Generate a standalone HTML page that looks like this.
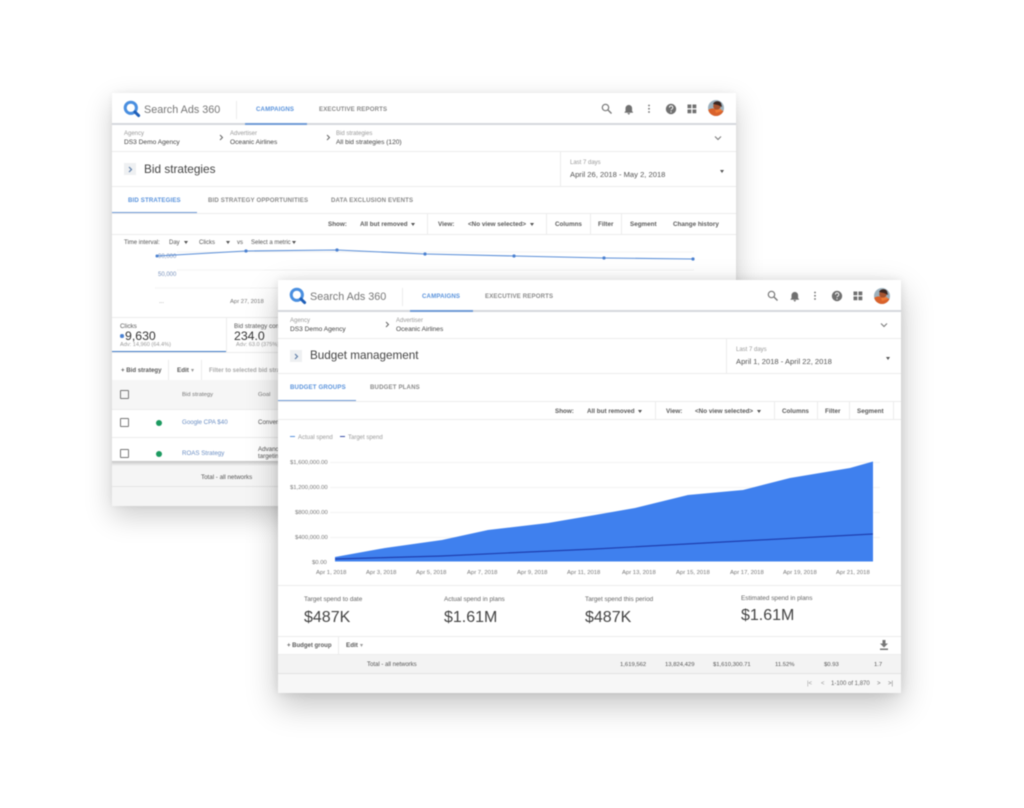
<!DOCTYPE html>
<html><head><meta charset="utf-8"><style>
html,body{margin:0;padding:0;background:#fff;width:1024px;height:808px;overflow:hidden}
body{position:relative;font-family:"Liberation Sans",Arial,sans-serif;color:#3c4043}
.card{position:absolute;background:#fff;box-shadow:0 10px 26px rgba(0,0,0,.2),0 0 8px rgba(0,0,0,.06);overflow:hidden;filter:blur(.42px)}
.t{position:absolute;white-space:nowrap;line-height:10px;height:10px;margin-top:1px}
.s{font-size:6.3px;color:#5a5a5a;font-weight:bold}
.g{font-size:5.9px;color:#777}
.gl{font-size:6px;color:#9a9a9a}
.tab{font-size:6.1px;font-weight:bold;color:#8a8a8a;letter-spacing:.15px}
.bl{color:#5a93dc}
.n{font-size:6.6px;color:#444}
.ln{position:absolute;background:#ececec}
.h{height:1px}.v{width:1px}
.abs{position:absolute}
.ar{position:absolute;width:0;height:0;border-left:2.5px solid transparent;border-right:2.5px solid transparent;border-top:3px solid #555}
.cb{position:absolute;width:7px;height:7px;border:1px solid #777;border-radius:1px}
.dot{position:absolute;width:6px;height:6px;border-radius:50%;background:#1c9a60}
</style></head><body>

<!-- BACK CARD -->
<div class="card" style="left:112px;top:93px;width:624px;height:413px">
<div style="position:absolute;inset:0;transform:translate(-112px,-93px);width:1024px;height:808px">
  <div class="abs" style="left:112px;top:123px;width:624px;height:2px;background:#d5d8dc"></div>
  <svg class="abs" style="left:123px;top:100px" width="18" height="18" viewBox="0 0 18 18"><circle cx="7.8" cy="7.8" r="5.6" fill="none" stroke="#4a8fe0" stroke-width="3"/><path d="M12 12l3.6 3.6" stroke="#1f5fb8" stroke-width="3" stroke-linecap="round"/></svg>
  <span class="t" style="left:144px;top:104px;font-size:10.8px;line-height:10px;color:#777">Search Ads 360</span>
  <div class="ln v" style="left:236px;top:101px;height:18px"></div>
  <span class="t tab bl" style="left:256px;top:104px">CAMPAIGNS</span>
  <div class="abs" style="left:245px;top:123px;width:62px;height:2px;background:#6f9ad6"></div>
  <span class="t tab" style="left:319px;top:104px">EXECUTIVE REPORTS</span>
  <svg class="abs" style="left:600px;top:102px" width="124" height="14" viewBox="0 0 124 14"><circle cx="5.5" cy="5.5" r="3.2" fill="none" stroke="#777" stroke-width="1.2"/><path d="M8 8l3.5 3.5" stroke="#777" stroke-width="1.3"/><path d="M24.5 10.5h8.5l-1.1-1.4V6.2a3.1 3.1 0 0 0-6.2 0v2.9zM27.6 11.2h2.3l-1.1 1.4z" fill="#707070" stroke="#707070" stroke-width=".4"/><circle cx="49" cy="3.5" r=".9" fill="#707070"/><circle cx="49" cy="6.8" r=".9" fill="#707070"/><circle cx="49" cy="10" r=".9" fill="#707070"/><circle cx="71" cy="7" r="5.2" fill="#707070"/><path d="M69.4 5.6a1.7 1.7 0 1 1 2.4 1.5c-.5.3-.8.5-.8 1.2" stroke="#fff" stroke-width=".9" fill="none"/><circle cx="71" cy="9.9" r=".6" fill="#fff"/><path d="M87.5 2.5h3.8v3.8h-3.8zM92.5 2.5h3.8v3.8h-3.8zM87.5 7.5h3.8v3.8h-3.8zM92.5 7.5h3.8v3.8h-3.8z" fill="#707070"/></svg>
  <svg class="abs" style="left:708px;top:100px" width="16" height="16" viewBox="0 0 16 16"><defs><clipPath id="a1"><circle cx="8" cy="8" r="8"/></clipPath></defs><g clip-path="url(#a1)"><rect width="16" height="16" fill="#9db1bd"/><path d="M0 16V10c3-2 5-2 8-1l8 2v5z" fill="#d9622b"/><circle cx="9" cy="6" r="3.8" fill="#a5532f"/><path d="M5 4c1-3 6-4 8-1l1 4-4-2z" fill="#3a2620"/><path d="M7 10l6-1 1 2-6 2z" fill="#ef7a35"/></g></svg>

  <span class="t gl" style="left:124px;top:128px">Agency</span>
  <span class="t n" style="left:124px;top:137px">DS3 Demo Agency</span>
  <svg class="abs" style="left:219px;top:134px" width="5" height="7"><path d="M1 1l2.5 2.5L1 6" fill="none" stroke="#666"/></svg>
  <span class="t gl" style="left:230px;top:128px">Advertiser</span>
  <span class="t n" style="left:230px;top:137px">Oceanic Airlines</span>
  <svg class="abs" style="left:326px;top:134px" width="5" height="7"><path d="M1 1l2.5 2.5L1 6" fill="none" stroke="#666"/></svg>
  <span class="t gl" style="left:336px;top:128px">Bid strategies</span>
  <span class="t n" style="left:336px;top:137px">All bid strategies (120)</span>
  <svg class="abs" style="left:714px;top:135px" width="8" height="6"><path d="M1 1.5l3 3 3-3" fill="none" stroke="#777"/></svg>
  <div class="ln h" style="left:112px;top:151px;width:624px"></div>

  <div class="abs" style="left:124px;top:163px;width:12px;height:12px;background:#eef0f2"></div>
  <svg class="abs" style="left:128px;top:166px" width="5" height="7"><path d="M1 1l2.5 2.5L1 6" fill="none" stroke="#5f7ea8" stroke-width="1.2"/></svg>
  <span class="t" style="left:144px;top:164px;font-size:11.8px;color:#444;margin-top:0">Bid strategies</span>
  <div class="ln v" style="left:560px;top:152px;height:34px"></div>
  <span class="t gl" style="left:570px;top:157px">Last 7 days</span>
  <span class="t" style="left:570px;top:169px;font-size:7.6px;color:#555">April 26, 2018 - May 2, 2018</span>
  <div class="ar" style="left:720px;top:170px"></div>
  <div class="ln h" style="left:112px;top:186px;width:624px"></div>

  <span class="t tab bl" style="left:128px;top:195px">BID STRATEGIES</span>
  <div class="abs" style="left:112px;top:212px;width:85px;height:1.5px;background:#6f9ad6"></div>
  <span class="t tab" style="left:208px;top:195px">BID STRATEGY OPPORTUNITIES</span>
  <span class="t tab" style="left:331px;top:195px">DATA EXCLUSION EVENTS</span>
  <div class="ln h" style="left:112px;top:213px;width:624px"></div>

  <span class="t s" style="left:328px;top:219px">Show:</span>
  <span class="t s" style="left:360px;top:219px">All but removed</span>
  <div class="ar" style="left:411px;top:223px"></div>
  <div class="ln v" style="left:427px;top:214px;height:20px"></div>
  <span class="t s" style="left:438px;top:219px">View:</span>
  <span class="t s" style="left:468px;top:219px">&lt;No view selected&gt;</span>
  <div class="ar" style="left:530px;top:223px"></div>
  <div class="ln v" style="left:546px;top:214px;height:20px"></div>
  <span class="t s" style="left:555px;top:219px">Columns</span>
  <div class="ln v" style="left:590px;top:214px;height:20px"></div>
  <span class="t s" style="left:598px;top:219px">Filter</span>
  <div class="ln v" style="left:621px;top:214px;height:20px"></div>
  <span class="t s" style="left:630px;top:219px">Segment</span>
  <span class="t s" style="left:673px;top:219px">Change history</span>
  <div class="ln h" style="left:112px;top:234px;width:624px"></div>

  <span class="t" style="left:124px;top:237px;font-size:6px;color:#555">Time interval:</span>
  <span class="t" style="left:169px;top:237px;font-size:6px;color:#555">Day</span>
  <div class="ar" style="left:184px;top:241px"></div>
  <span class="t" style="left:199px;top:237px;font-size:6px;color:#555">Clicks</span>
  <div class="ar" style="left:226px;top:241px"></div>
  <span class="t" style="left:237px;top:237px;font-size:6px;color:#555">vs</span>
  <span class="t" style="left:251px;top:237px;font-size:6px;color:#555">Select a metric</span>
  <div class="ar" style="left:292px;top:241px"></div>

  <span class="t" style="left:158px;top:251px;font-size:6px;color:#7a93bd">90,000</span>
  <span class="t" style="left:158px;top:269px;font-size:6px;color:#7a93bd">50,000</span>
  <span class="t gl" style="left:159px;top:296px">...</span>
  <span class="t g" style="left:230px;top:296px">Apr 27, 2018</span>
  <svg class="abs" style="left:112px;top:240px" width="624" height="60" viewBox="112 240 624 60">
    <path d="M177 252H694M177 270H694M155 288H694" stroke="#f3f3f3" stroke-width="1"/>
    <polyline points="157,256 246,251 337,250 425,254 514,256 604,258 693,259" fill="none" stroke="#5b8fd8" stroke-width="1.1"/>
    <g fill="#4a80d0"><circle cx="157" cy="256" r="1.5"/><circle cx="246" cy="251" r="1.6"/><circle cx="337" cy="250" r="1.6"/><circle cx="425" cy="254" r="1.6"/><circle cx="514" cy="256" r="1.6"/><circle cx="604" cy="258" r="1.6"/><circle cx="693" cy="259" r="1.6"/></g>
  </svg>
  <div class="ln h" style="left:112px;top:317px;width:624px"></div>

  <span class="t" style="left:120px;top:321px;font-size:6.3px;color:#555">Clicks</span>
  <div class="abs" style="left:120px;top:334px;width:3.5px;height:3.5px;border-radius:50%;background:#4a80d0"></div>
  <span class="t" style="left:125px;top:331px;font-size:12.3px;line-height:11px;color:#333;margin-top:0">9,630</span>
  <span class="t gl" style="left:120px;top:339px;font-size:5.6px">Adv: 14,960 (64.4%)</span>
  <div class="abs" style="left:112px;top:351px;width:114px;height:1.5px;background:#3f7bc8"></div>
  <div class="ln v" style="left:226px;top:318px;height:34px"></div>
  <span class="t" style="left:234px;top:321px;font-size:6.3px;color:#555">Bid strategy conv.</span>
  <span class="t" style="left:234px;top:331px;font-size:12.3px;line-height:11px;color:#333;margin-top:0">234.0</span>
  <span class="t gl" style="left:236px;top:339px;font-size:5.6px">Adv: 63.0 (375%)</span>
  <div class="ln h" style="left:112px;top:352px;width:624px"></div>

  <span class="t s" style="left:121px;top:365px;font-size:6.1px">+ Bid strategy</span>
  <div class="ln v" style="left:168px;top:360px;height:20px"></div>
  <span class="t s" style="left:177px;top:365px">Edit</span>
  <span class="t gl" style="left:191px;top:365px">▾</span>
  <div class="ln v" style="left:201px;top:360px;height:20px"></div>
  <span class="t gl" style="left:209px;top:365px;font-weight:bold;color:#aaa">Filter to selected bid strategies</span>

  <div class="abs" style="left:112px;top:380px;width:624px;height:29px;background:#f6f6f6"></div>
  <div class="cb" style="left:120px;top:390px"></div>
  <span class="t g" style="left:182px;top:389px">Bid strategy</span>
  <span class="t g" style="left:258px;top:389px">Goal</span>
  <div class="ln h" style="left:112px;top:409px;width:624px"></div>
  <div class="cb" style="left:120px;top:418px"></div>
  <div class="dot" style="left:156px;top:420px"></div>
  <span class="t" style="left:182px;top:417px;font-size:6.2px;color:#6b8fc4">Google CPA $40</span>
  <span class="t" style="left:258px;top:417px;font-size:6.2px;color:#555">Conversions</span>
  <div class="ln h" style="left:112px;top:437px;width:624px"></div>
  <div class="cb" style="left:120px;top:449px"></div>
  <div class="dot" style="left:156px;top:451px"></div>
  <span class="t" style="left:182px;top:448px;font-size:6.2px;color:#6b8fc4">ROAS Strategy</span>
  <span class="t" style="left:258px;top:444px;font-size:6.2px;color:#555">Advanced</span>
  <span class="t" style="left:258px;top:451px;font-size:6.2px;color:#555">targeting</span>
  <div class="abs" style="left:112px;top:462px;width:624px;height:44px;background:#f5f5f5"></div>
  <div class="abs" style="left:112px;top:461px;width:624px;height:5px;background:linear-gradient(#c4c4c4,#f5f5f5)"></div>
  <span class="t" style="left:201px;top:472px;font-size:6.2px;color:#555">Total - all networks</span>
  <div class="ln h" style="left:112px;top:486px;width:624px;background:#e4e4e4"></div>
</div>
</div>

<!-- FRONT CARD -->
<div class="card" style="left:278px;top:280px;width:623px;height:413px;box-shadow:0 12px 30px rgba(0,0,0,.24),0 0 10px rgba(0,0,0,.1)">
<div style="position:absolute;inset:0;transform:translate(-278px,-280px);width:1024px;height:808px">
  <div class="abs" style="left:278px;top:310px;width:623px;height:2px;background:#d5d8dc"></div>
  <svg class="abs" style="left:289px;top:287px" width="18" height="18" viewBox="0 0 18 18"><circle cx="7.8" cy="7.8" r="5.6" fill="none" stroke="#4a8fe0" stroke-width="3"/><path d="M12 12l3.6 3.6" stroke="#1f5fb8" stroke-width="3" stroke-linecap="round"/></svg>
  <span class="t" style="left:310px;top:291px;font-size:10.8px;line-height:10px;color:#777">Search Ads 360</span>
  <div class="ln v" style="left:402px;top:288px;height:18px"></div>
  <span class="t tab bl" style="left:422px;top:291px">CAMPAIGNS</span>
  <div class="abs" style="left:410px;top:310px;width:63px;height:2px;background:#6f9ad6"></div>
  <span class="t tab" style="left:485px;top:291px">EXECUTIVE REPORTS</span>
  <svg class="abs" style="left:766px;top:289px" width="124" height="14" viewBox="0 0 124 14"><circle cx="5.5" cy="5.5" r="3.2" fill="none" stroke="#777" stroke-width="1.2"/><path d="M8 8l3.5 3.5" stroke="#777" stroke-width="1.3"/><path d="M24.5 10.5h8.5l-1.1-1.4V6.2a3.1 3.1 0 0 0-6.2 0v2.9zM27.6 11.2h2.3l-1.1 1.4z" fill="#707070" stroke="#707070" stroke-width=".4"/><circle cx="49" cy="3.5" r=".9" fill="#707070"/><circle cx="49" cy="6.8" r=".9" fill="#707070"/><circle cx="49" cy="10" r=".9" fill="#707070"/><circle cx="71" cy="7" r="5.2" fill="#707070"/><path d="M69.4 5.6a1.7 1.7 0 1 1 2.4 1.5c-.5.3-.8.5-.8 1.2" stroke="#fff" stroke-width=".9" fill="none"/><circle cx="71" cy="9.9" r=".6" fill="#fff"/><path d="M87.5 2.5h3.8v3.8h-3.8zM92.5 2.5h3.8v3.8h-3.8zM87.5 7.5h3.8v3.8h-3.8zM92.5 7.5h3.8v3.8h-3.8z" fill="#707070"/></svg>
  <svg class="abs" style="left:874px;top:288px" width="16" height="16" viewBox="0 0 16 16"><defs><clipPath id="a2"><circle cx="8" cy="8" r="8"/></clipPath></defs><g clip-path="url(#a2)"><rect width="16" height="16" fill="#9db1bd"/><path d="M0 16V10c3-2 5-2 8-1l8 2v5z" fill="#d9622b"/><circle cx="9" cy="6" r="3.8" fill="#a5532f"/><path d="M5 4c1-3 6-4 8-1l1 4-4-2z" fill="#3a2620"/><path d="M7 10l6-1 1 2-6 2z" fill="#ef7a35"/></g></svg>

  <span class="t gl" style="left:290px;top:315px">Agency</span>
  <span class="t n" style="left:290px;top:324px">DS3 Demo Agency</span>
  <svg class="abs" style="left:385px;top:321px" width="5" height="7"><path d="M1 1l2.5 2.5L1 6" fill="none" stroke="#666"/></svg>
  <span class="t gl" style="left:396px;top:315px">Advertiser</span>
  <span class="t n" style="left:396px;top:324px">Oceanic Airlines</span>
  <svg class="abs" style="left:880px;top:322px" width="8" height="6"><path d="M1 1.5l3 3 3-3" fill="none" stroke="#777"/></svg>
  <div class="ln h" style="left:278px;top:338px;width:623px"></div>

  <div class="abs" style="left:290px;top:350px;width:12px;height:12px;background:#eef0f2"></div>
  <svg class="abs" style="left:294px;top:353px" width="5" height="7"><path d="M1 1l2.5 2.5L1 6" fill="none" stroke="#5f7ea8" stroke-width="1.2"/></svg>
  <span class="t" style="left:310px;top:351px;font-size:11.7px;color:#444;margin-top:0">Budget management</span>
  <div class="ln v" style="left:726px;top:339px;height:34px"></div>
  <span class="t gl" style="left:736px;top:344px">Last 7 days</span>
  <span class="t" style="left:736px;top:356px;font-size:7.6px;color:#555">April 1, 2018 - April 22, 2018</span>
  <div class="ar" style="left:886px;top:357px"></div>
  <div class="ln h" style="left:278px;top:373px;width:623px"></div>

  <span class="t tab bl" style="left:290px;top:382px">BUDGET GROUPS</span>
  <div class="abs" style="left:278px;top:400px;width:78px;height:1.5px;background:#6f9ad6"></div>
  <span class="t tab" style="left:370px;top:382px">BUDGET PLANS</span>
  <div class="ln h" style="left:278px;top:401px;width:623px"></div>

  <span class="t s" style="left:555px;top:406px">Show:</span>
  <span class="t s" style="left:587px;top:406px">All but removed</span>
  <div class="ar" style="left:638px;top:410px"></div>
  <div class="ln v" style="left:655px;top:402px;height:18px"></div>
  <span class="t s" style="left:666px;top:406px">View:</span>
  <span class="t s" style="left:695px;top:406px">&lt;No view selected&gt;</span>
  <div class="ar" style="left:757px;top:410px"></div>
  <div class="ln v" style="left:774px;top:402px;height:18px"></div>
  <span class="t s" style="left:782px;top:406px">Columns</span>
  <div class="ln v" style="left:817px;top:402px;height:18px"></div>
  <span class="t s" style="left:825px;top:406px">Filter</span>
  <div class="ln v" style="left:849px;top:402px;height:18px"></div>
  <span class="t s" style="left:857px;top:406px">Segment</span>
  <div class="ln v" style="left:893px;top:402px;height:18px"></div>
  <div class="ln h" style="left:278px;top:419px;width:623px"></div>

  <div class="abs" style="left:290px;top:436px;width:5px;height:1.4px;background:#5a93dc"></div>
  <span class="t gl" style="left:298px;top:432px">Actual spend</span>
  <div class="abs" style="left:340px;top:436px;width:5px;height:1.4px;background:#3a4fa8"></div>
  <span class="t gl" style="left:348px;top:432px">Target spend</span>

  <svg class="abs" style="left:278px;top:450px" width="623" height="120" viewBox="278 450 623 120">
    <path d="M330 462.5H880M330 487.5H880M330 512.5H880M330 537.5H880" stroke="#f3f3f3" stroke-width="1"/>
    <path d="M335 557L385 548L442 540L488 530L548 523L595 515L635 508L688 495L743 490L790 478L850 468L873 461.5V561.5H335Z" fill="#3f80ee"/>
    <polyline points="335,559 442,556 528,552 595,549 723,542 873,534" fill="none" stroke="#1f3fb0" stroke-width="1.2"/>
  </svg>
  <span class="t g" style="left:290px;top:457px">$1,600,000.00</span>
  <span class="t g" style="left:290px;top:482px">$1,200,000.00</span>
  <span class="t g" style="left:295px;top:507px">$800,000.00</span>
  <span class="t g" style="left:295px;top:532px">$400,000.00</span>
  <span class="t g" style="left:312px;top:557px">$0.00</span>
  <span class="t g" style="left:316px;top:567px">Apr 1, 2018</span>
  <span class="t g" style="left:366px;top:567px">Apr 3, 2018</span>
  <span class="t g" style="left:416px;top:567px">Apr 5, 2018</span>
  <span class="t g" style="left:467px;top:567px">Apr 7, 2018</span>
  <span class="t g" style="left:517px;top:567px">Apr 9, 2018</span>
  <span class="t g" style="left:567px;top:567px">Apr 11, 2018</span>
  <span class="t g" style="left:622px;top:567px">Apr 13, 2018</span>
  <span class="t g" style="left:676px;top:567px">Apr 15, 2018</span>
  <span class="t g" style="left:730px;top:567px">Apr 17, 2018</span>
  <span class="t g" style="left:783px;top:567px">Apr 19, 2018</span>
  <span class="t g" style="left:836px;top:567px">Apr 21, 2018</span>
  <div class="ln h" style="left:278px;top:585px;width:623px"></div>

  <span class="t" style="left:304px;top:594px;font-size:6.4px;color:#666">Target spend to date</span>
  <span class="t" style="left:304px;top:611px;font-size:16px;line-height:12px;color:#444">$487K</span>
  <span class="t" style="left:444px;top:594px;font-size:6.4px;color:#666">Actual spend in plans</span>
  <span class="t" style="left:444px;top:611px;font-size:16px;line-height:12px;color:#444">$1.61M</span>
  <span class="t" style="left:585px;top:594px;font-size:6.4px;color:#666">Target spend this period</span>
  <span class="t" style="left:585px;top:611px;font-size:16px;line-height:12px;color:#444">$487K</span>
  <span class="t" style="left:741px;top:593px;font-size:6.4px;color:#666">Estimated spend in plans</span>
  <span class="t" style="left:741px;top:609px;font-size:16px;line-height:12px;color:#444">$1.61M</span>
  <div class="ln h" style="left:278px;top:636px;width:623px"></div>

  <span class="t s" style="left:287px;top:640px;font-size:6px">+ Budget group</span>
  <div class="ln v" style="left:338px;top:637px;height:17px"></div>
  <span class="t s" style="left:346px;top:640px">Edit</span>
  <span class="t gl" style="left:360px;top:640px">▾</span>
  <svg class="abs" style="left:880px;top:640px" width="8" height="10" viewBox="0 0 8 10"><path d="M2.5 0h3v3.5H8L4 7.5 0 3.5h2.5zM0 8.5h8V10H0z" fill="#777"/></svg>
  <div class="abs" style="left:278px;top:654px;width:623px;height:19px;background:#f3f3f3"></div>
  <div class="ln h" style="left:278px;top:654px;width:623px"></div>
  <span class="t" style="left:367px;top:659px;font-size:6px;color:#555">Total - all networks</span>
  <span class="t g" style="left:620px;top:659px;color:#555">1,619,562</span>
  <span class="t g" style="left:665px;top:659px;color:#555">13,824,429</span>
  <span class="t g" style="left:713px;top:659px;color:#555">$1,610,300.71</span>
  <span class="t g" style="left:775px;top:659px;color:#555">11.52%</span>
  <span class="t g" style="left:824px;top:659px;color:#555">$0.93</span>
  <span class="t g" style="left:874px;top:659px;color:#555">1.7</span>
  <div class="abs" style="left:278px;top:673px;width:623px;height:20px;background:#f7f7f7;border-top:1px solid #e2e2e2"></div>
  <span class="t" style="left:807px;top:678px;font-size:6px;color:#999">|&lt;</span>
  <span class="t" style="left:821px;top:678px;font-size:6px;color:#999">&lt;</span>
  <span class="t" style="left:831px;top:678px;font-size:6px;color:#666">1-100 of 1,870</span>
  <span class="t" style="left:877px;top:678px;font-size:6px;color:#777">&gt;</span>
  <span class="t" style="left:888px;top:678px;font-size:6px;color:#777">&gt;|</span>
</div>
</div>
</body></html>
